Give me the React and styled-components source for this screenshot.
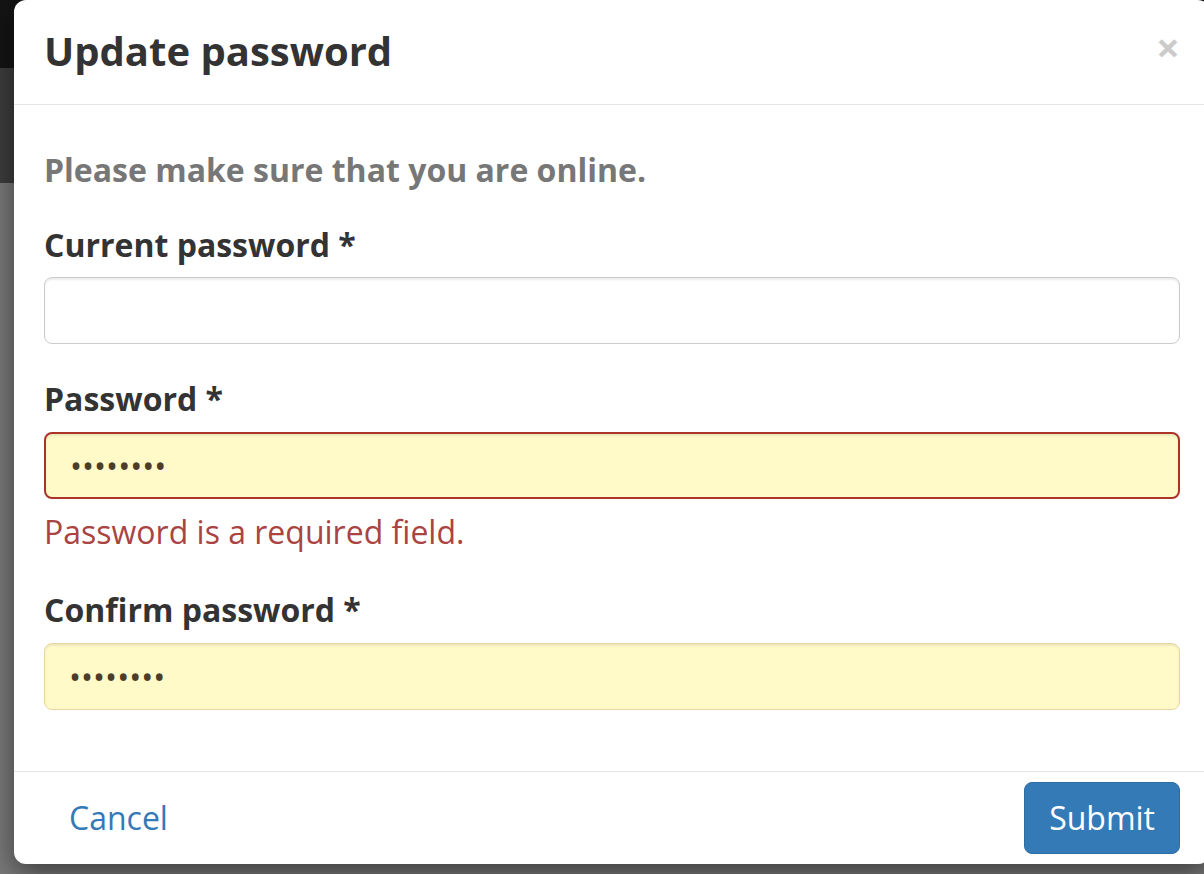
import React from "react";
import styled, { createGlobalStyle } from "styled-components";

const GlobalStyle = createGlobalStyle`
  html, body {
    margin: 0;
    padding: 0;
    overflow: hidden;
  }
  body {
    font-family: "Open Sans", "Liberation Sans", sans-serif;
    background: linear-gradient(
      to bottom,
      #141414 0,
      #141414 68px,
      #3d3d3d 68px,
      #3d3d3d 183px,
      #7a7a7a 183px
    );
    min-height: 874px;
  }
`;

const Page = styled.div`
  height: 874px;
  padding-left: 14px;
`;

const Modal = styled.div`
  width: 1196px;
  background: #fff;
  border-radius: 12px;
  box-shadow: 0 10px 30px rgba(0, 0, 0, 0.5);
  color: #333;
`;

const Header = styled.div`
  display: flex;
  justify-content: space-between;
  align-items: flex-start;
  box-sizing: border-box;
  height: 105px;
  padding: 29px 30px 0;
  border-bottom: 1px solid #e5e5e5;
`;

const Title = styled.h4`
  margin: 0;
  font-size: 40px;
  line-height: 1.1;
  font-weight: 700;
  color: #333;
`;

const Close = styled.button`
  margin-top: -3px;
  padding: 0;
  border: 0;
  background: none;
  font-family: inherit;
  font-size: 42px;
  font-weight: 700;
  line-height: 1;
  color: #000;
  opacity: 0.2;
  cursor: pointer;
`;

const Body = styled.div`
  padding: 42px 30px 29px;
`;

const Intro = styled.p`
  margin: 0 0 29px;
  font-size: 32px;
  line-height: 1.42857;
  font-weight: 700;
  color: #777;
`;

const Group = styled.div`
  margin-bottom: 32px;
`;

const Label = styled.label`
  display: block;
  margin-bottom: 10px;
  font-size: 32px;
  line-height: 1.42857;
  font-weight: 700;
  color: #333;
`;

const borders = {
  error: "#ab3428",
  autofill: "#ead6a4",
};

const Input = styled.input`
  display: block;
  width: 100%;
  height: 67px;
  box-sizing: border-box;
  padding: 0 24px;
  font-family: "Open Sans", "Liberation Sans", sans-serif;
  font-size: 32px;
  color: #4a3e2b;
  background: ${(p) => (p.$state ? "#fffac8" : "#fff")};
  border: 1px solid ${(p) => borders[p.$state] || "#ccc"};
  border-width: ${(p) => (p.$state === "error" ? "2px" : "1px")};
  border-radius: 8px;
  box-shadow: inset 0 2px 2px rgba(0, 0, 0, 0.075);
  outline: none;
`;

const Help = styled.span`
  display: block;
  margin: 10px 0 4px;
  font-size: 32px;
  line-height: 1.42857;
  color: #a94442;
`;

const Footer = styled.div`
  display: flex;
  justify-content: space-between;
  align-items: center;
  padding: 10px 30px;
  border-top: 1px solid #e5e5e5;
`;

const Button = styled.button`
  height: 72px;
  padding: 0 24px;
  font-family: "Open Sans", "Liberation Sans", sans-serif;
  font-size: 32px;
  line-height: 1.42857;
  border-radius: 8px;
  cursor: pointer;
  border: 1px solid ${(p) => (p.$variant === "primary" ? "#2e6da4" : "transparent")};
  background: ${(p) => (p.$variant === "primary" ? "#337ab7" : "transparent")};
  color: ${(p) => (p.$variant === "primary" ? "#fff" : "#337ab7")};
`;

export default function App() {
  return (
    <Page>
      <GlobalStyle />
      <Modal>
        <Header>
          <Title>Update password</Title>
          <Close aria-label="Close">×</Close>
        </Header>
        <Body>
          <Intro>Please make sure that you are online.</Intro>
          <Group>
            <Label>Current password *</Label>
            <Input type="password" />
          </Group>
          <Group>
            <Label>Password *</Label>
            <Input type="password" $state="error" defaultValue="12345678" />
            <Help>Password is a required field.</Help>
          </Group>
          <Group>
            <Label>Confirm password *</Label>
            <Input type="password" $state="autofill" defaultValue="12345678" />
          </Group>
        </Body>
        <Footer>
          <Button>Cancel</Button>
          <Button $variant="primary">Submit</Button>
        </Footer>
      </Modal>
    </Page>
  );
}
